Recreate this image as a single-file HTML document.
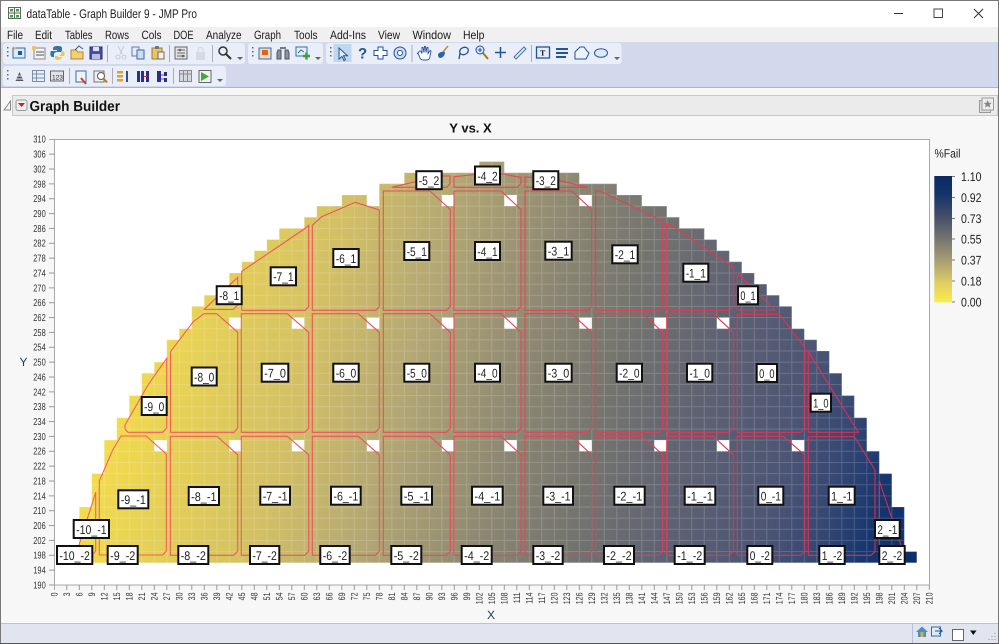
<!DOCTYPE html>
<html><head><meta charset="utf-8"><title>dataTable - Graph Builder 9 - JMP Pro</title>
<style>
html,body{margin:0;padding:0;background:#fff;width:999px;height:644px;overflow:hidden}
svg{display:block}
text{font-family:"Liberation Sans",sans-serif;text-rendering:geometricPrecision}
.m text{font-size:12px;fill:#1a1a1a}
.y text{font-size:10px;fill:#333}
.x text{font-size:9.5px;fill:#333;text-anchor:end}
.l rect{fill:#fff;stroke:#111;stroke-width:2}
.l text{font-size:12.5px;fill:#222}
.r path{fill:none;stroke:url(#red);stroke-width:1.1}
</style></head><body>
<svg width="999" height="644" viewBox="0 0 999 644" xmlns="http://www.w3.org/2000/svg">
<defs>
<linearGradient id="heat" gradientUnits="userSpaceOnUse" x1="80" y1="518" x2="872" y2="732">
<stop offset="0" stop-color="#f3dc4c"/><stop offset=".22" stop-color="#d2bf66"/><stop offset=".34" stop-color="#b3a774"/><stop offset=".48" stop-color="#8c8772"/><stop offset=".574" stop-color="#76766f"/><stop offset=".69" stop-color="#5f6272"/><stop offset=".81" stop-color="#4c5574"/><stop offset=".874" stop-color="#374873"/><stop offset=".936" stop-color="#17366e"/><stop offset="1" stop-color="#0a2d69"/>
</linearGradient>
<linearGradient id="red" gradientUnits="userSpaceOnUse" x1="80" y1="0" x2="900" y2="0"><stop offset="0" stop-color="#f4655c"/><stop offset=".5" stop-color="#e9475a"/><stop offset="1" stop-color="#d82a50"/></linearGradient>
<linearGradient id="leg" x1="0" y1="0" x2="0" y2="1"><stop offset="0" stop-color="#0a2a62"/><stop offset=".14" stop-color="#15336a"/><stop offset=".3" stop-color="#3f4a68"/><stop offset=".5" stop-color="#75756f"/><stop offset=".7" stop-color="#b1a672"/><stop offset=".85" stop-color="#dfcf62"/><stop offset="1" stop-color="#fdeb47"/></linearGradient>
<pattern id="grid" patternUnits="userSpaceOnUse" x="78.8" y="161.1" width="12.5" height="11.143"><path d="M.5 0V11.143M0 .5H12.5" stroke="#fff" stroke-opacity=".17" fill="none"/></pattern>
<pattern id="tx" patternUnits="userSpaceOnUse" x="53.8" y="585" width="12.5" height="6"><path d="M.5 0V6" stroke="#999" fill="none"/></pattern>
<pattern id="ty" patternUnits="userSpaceOnUse" x="49" y="138.8" width="6" height="14.857"><path d="M0 .5H6" stroke="#999" fill="none"/></pattern>
</defs>

<!-- window -->
<rect width="999" height="644" fill="#f7f7f7"/>
<rect width="999" height="27" fill="#fff"/>
<rect width="999" height="1" fill="#777"/>
<rect y="27" width="999" height="15" fill="#f0f0f0"/>
<rect y="42" width="999" height="45" fill="#d3d9ec"/>
<rect y="87" width="999" height="1" fill="#aab2d4"/>

<!-- title bar -->
<g fill="none" stroke="#5a6a55"><rect x="8.5" y="7.5" width="12" height="11"/><path d="M14.5 7.5v11M8.5 13h12"/></g>
<g fill="#3fa34d"><rect x="10" y="9" width="3" height="2.5"/><rect x="16" y="9" width="3" height="2.5"/><rect x="10" y="15" width="3" height="2.5"/><rect x="16" y="15" width="3" height="2.5"/></g>
<text x="26.5" y="18" font-size="12.5" fill="#222" textLength="170.5" lengthAdjust="spacingAndGlyphs">dataTable - Graph Builder 9 - JMP Pro</text>
<path d="M894 13.5h9" stroke="#333" fill="none"/>
<rect x="934" y="9" width="8.5" height="8.5" fill="none" stroke="#444"/>
<path d="M974 9l9 9M983 9l-9 9" stroke="#333" fill="none"/>

<!-- menu -->
<g class="m">
<text x="7" y="39" textLength="16" lengthAdjust="spacingAndGlyphs">File</text>
<text x="35" y="39" textLength="17" lengthAdjust="spacingAndGlyphs">Edit</text>
<text x="65" y="39" textLength="27.5" lengthAdjust="spacingAndGlyphs">Tables</text>
<text x="105" y="39" textLength="24" lengthAdjust="spacingAndGlyphs">Rows</text>
<text x="141.5" y="39" textLength="20" lengthAdjust="spacingAndGlyphs">Cols</text>
<text x="173.5" y="39" textLength="20" lengthAdjust="spacingAndGlyphs">DOE</text>
<text x="206" y="39" textLength="35.5" lengthAdjust="spacingAndGlyphs">Analyze</text>
<text x="254" y="39" textLength="27" lengthAdjust="spacingAndGlyphs">Graph</text>
<text x="294" y="39" textLength="23.5" lengthAdjust="spacingAndGlyphs">Tools</text>
<text x="330" y="39" textLength="36" lengthAdjust="spacingAndGlyphs">Add-Ins</text>
<text x="378" y="39" textLength="22" lengthAdjust="spacingAndGlyphs">View</text>
<text x="412.5" y="39" textLength="38.5" lengthAdjust="spacingAndGlyphs">Window</text>
<text x="463" y="39" textLength="21.5" lengthAdjust="spacingAndGlyphs">Help</text>
</g>

<!-- toolbars -->
<g fill="#e9eef8">
<rect x="3" y="43" width="242" height="21" rx="3"/><rect x="248" y="43" width="75" height="21" rx="3"/><rect x="326" y="43" width="295.5" height="21" rx="3"/><rect x="3" y="66" width="223" height="20" rx="3"/>
</g>
<rect x="333.5" y="44" width="18" height="18" fill="#bfd8f0"/>
<g fill="#666"><path d="M7 47h1.500v1.500H7zM7 51h1.500v1.500H7zM7 55h1.500v1.500H7zM7 70h1.500v1.500H7zM7 74h1.500v1.500H7zM7 78h1.500v1.500H7zM252 47h1.500v1.500H252zM252 51h1.500v1.500H252zM252 55h1.500v1.500H252zM330 47h1.500v1.500H330zM330 51h1.500v1.500H330zM330 55h1.500v1.500H330z"/>
<path d="M237 57h6l-3 3zM315 57h6l-3 3zM614 57h6l-3 3zM217 79h6l-3 3z"/></g>
<g fill="#a8adb8"><rect x="107" y="45" width="1" height="17"/><rect x="169" y="45" width="1" height="17"/><rect x="212" y="45" width="1" height="17"/><rect x="411.5" y="45" width="1" height="17"/><rect x="531" y="45" width="1" height="17"/><rect x="69" y="68" width="1" height="16"/><rect x="112" y="68" width="1" height="16"/><rect x="173" y="68" width="1" height="16"/></g>

<!-- row 1 icons -->
<rect x="13" y="48" width="12" height="10" fill="#dfe9f6" stroke="#2f6ea8"/><path d="M13 46l3 2-2 2z" fill="#f0b72c"/><rect x="18" y="51" width="4" height="4" fill="#1d5c97"/>
<rect x="34" y="48" width="11" height="11" fill="#f3f3f3" stroke="#8a8a8a"/><path d="M32 46h4v4h-4z" fill="#f0c94a"/><path d="M36 52h8M36 55h8" stroke="#555"/>
<path d="M57 46c-4 0-4 2-4 4h4v1h-6c-1 2-1 5 1 6h2v-2c0-2 1-3 3-3h3c2 0 2-1 2-2v-2c0-2-3-2-5-2z" fill="#3572a5"/><path d="M57 60c4 0 5-2 5-3h-4v-1h6c1-2 1-4-1-5h-2v2c0 2-1 3-3 3h-3v2c0 1 1 2 2 2z" fill="#f3c93f"/>
<path d="M71 50h5l2 2h5v7H71z" fill="#f2cf73" stroke="#b08a35"/><path d="M75 50l4-4 4 3" fill="none" stroke="#555"/>
<rect x="90" y="47" width="12" height="12" fill="#4a4fa0" stroke="#2c2f73"/><rect x="93" y="47" width="6" height="4" fill="#dfe3f2"/><rect x="92" y="54" width="8" height="5" fill="#b9bde0"/>
<path d="M118 46l4 8M124 46l-4 8" stroke="#c5cad4" fill="none"/><circle cx="118" cy="57" r="2" fill="none" stroke="#c5cad4"/><circle cx="124" cy="57" r="2" fill="none" stroke="#c5cad4"/>
<rect x="132" y="47" width="7" height="9" fill="#e6edf8" stroke="#5f7fa8"/><rect x="137" y="50" width="7" height="9" fill="#cfdcf0" stroke="#3b6aa0"/>
<rect x="152" y="48" width="10" height="11" fill="#e8c56a" stroke="#9b7a2e"/><rect x="155" y="46" width="4" height="3" fill="#777"/><rect x="158" y="52" width="6" height="7" fill="#f2f2f2" stroke="#7a6a3a"/>
<rect x="175" y="47" width="12" height="12" fill="#e4e4e4" stroke="#666"/><path d="M177 50h8M177 53h8M177 56h8" stroke="#666"/><circle cx="180" cy="50" r="1.300" fill="#666"/><circle cx="183" cy="56" r="1.300" fill="#666"/>
<rect x="196" y="52" width="9" height="8" fill="#d5dae4"/><path d="M198 52v-2a2.500 2.500 0 015 0v2" fill="none" stroke="#d5dae4" stroke-width="1.300"/>
<circle cx="223" cy="51" r="4" fill="none" stroke="#333" stroke-width="1.500"/><path d="M226 54l5 5" stroke="#333" stroke-width="2"/>
<rect x="259" y="48" width="12" height="11" fill="#f4d9c2" stroke="#3a6ea5"/><rect x="262" y="50" width="6" height="5" fill="#d9651f"/>
<path d="M278 50h3v9h-4v-6zM285 50h3l1 3v6h-4z" fill="#8a949f" stroke="#4a5560"/><path d="M280 48h6" stroke="#4a5560" fill="none" stroke-width="1.500"/>
<rect x="296" y="47" width="11" height="9" fill="#e6eef8" stroke="#2f6ea8"/><path d="M298 53l3-3 3 2" stroke="#2f6ea8" fill="none"/><path d="M303 56h7M306.500 52.500v7" stroke="#3f9d3f" stroke-width="2.500"/>
<path d="M339 48v11l3-2.500 2 4 1.500-.7-2-4h4z" fill="#e4eefa" stroke="#24549a"/>
<text x="358" y="58.500" font-size="15" font-weight="bold" fill="#1f4e9b">?</text>
<path d="M378 47h5v3.500h4v5h-4V59h-5v-3.500h-4v-5h4z" fill="#fff" stroke="#2153a0"/>
<circle cx="400" cy="53" r="6" fill="#cfdcf0" stroke="#2153a0"/><circle cx="400" cy="53" r="2.500" fill="#fff" stroke="#2153a0"/>
<path d="M418 53l2 5c1 2 2 2 4 2h3c2 0 3-2 3-4l1-5-1-.5-2 3 0-6h-1l-1 5-.5-6h-1l-.5 6-1-5h-1v6l-1-2c-1-1-2-.5-2 .5l-2 2z" fill="#fff" stroke="#2153a0" stroke-width=".9"/>
<path d="M438 54c2-2 5-3 7-2 0 3-2 6-5 6-1 0-2-1-2-4z" fill="#2c62ad"/><path d="M443 52l5-6" stroke="#c8892c" stroke-width="1.500"/>
<ellipse cx="464" cy="51" rx="4.500" ry="3.500" fill="none" stroke="#2153a0" stroke-width="1.300" transform="rotate(-25 464 51)"/><path d="M460 53l-1 6" stroke="#2153a0" stroke-width="1.300"/>
<circle cx="480" cy="50" r="4" fill="#dbe7f6" stroke="#2153a0"/><path d="M483 53l5 6" stroke="#a8781f" stroke-width="2"/><path d="M478 50h4M480 48v4" stroke="#2153a0"/>
<path d="M495 52.500h11M500.500 47v11" stroke="#2153a0" stroke-width="1.500"/>
<path d="M514 57l10-10 2 2-10 10z" fill="#dfe8f5" stroke="#4a74ad"/>
<rect x="536.500" y="47" width="13" height="11" fill="#e4eefa" stroke="#2153a0" stroke-width="1.300"/><text x="540" y="55.500" font-size="8" font-weight="bold" style="font-family:'Liberation Serif',serif" fill="#111">T</text>
<path d="M556 49h12M556 53h12M556 57h10" stroke="#2153a0" stroke-width="2" fill="none"/>
<path d="M575 59v-7l5-5h4l3 4 2 2-3 6z" fill="#eef3fa" stroke="#2153a0"/>
<ellipse cx="601" cy="53" rx="6.500" ry="4.300" fill="#dfe9f6" stroke="#2153a0"/>

<!-- row 2 icons -->
<path d="M19.500 72l4 9h-8z" fill="#555"/><path d="M15 79h9M16.500 76h6" stroke="#e9eef8"/>
<g fill="none" stroke="#7a8ea8"><rect x="32.500" y="70.500" width="12" height="11"/><path d="M36.500 70.500v11M32.500 74h12M32.500 78h12"/></g>
<rect x="50.500" y="71" width="13" height="10" fill="#dfe3e8" stroke="#666"/><text x="52" y="79.500" font-size="6.500" fill="#333">123</text>
<rect x="76" y="71" width="10" height="11" fill="#f0f4fa" stroke="#3a6ea5"/><path d="M81 78l5 6" stroke="#c9402a" stroke-width="2"/>
<rect x="94" y="71" width="10" height="11" fill="#eee" stroke="#777"/><circle cx="101" cy="76" r="3.500" fill="#fff" stroke="#555"/><path d="M103.500 78.500l3.500 4" stroke="#b07c22" stroke-width="2"/>
<g fill="#d9a52b"><rect x="117" y="71" width="6" height="2.500"/><rect x="117" y="75" width="6" height="2.500"/><rect x="117" y="79" width="6" height="2.500"/></g><path d="M127 71v11" stroke="#2153a0" stroke-width="2"/>
<g fill="#26308f"><rect x="137" y="71" width="3" height="11"/><rect x="141" y="71" width="3" height="11"/><rect x="146" y="71" width="3" height="11"/></g><path d="M144 76.500h3" stroke="#c33" />
<g fill="#26308f"><rect x="157" y="71" width="4" height="11"/><rect x="164" y="72" width="3" height="4"/><rect x="164" y="78" width="3" height="4"/></g><path d="M161 75h3M161 79h3" stroke="#c33"/>
<g fill="none" stroke="#8a8a8a"><rect x="179.500" y="70.500" width="12" height="11" fill="#d5d8de"/><path d="M183.500 70.500v11M187.500 70.500v11M179.500 74h12"/></g>
<rect x="199" y="70.500" width="12" height="12" fill="#f2f2f2" stroke="#666"/><path d="M201 72v9l8-4.500z" fill="#3cab3c"/>

<!-- graph builder header -->
<path d="M10.500 101v9H4z" fill="#f4f4f4" stroke="#888"/>
<rect x="12.500" y="95.500" width="985" height="20" fill="#ebebeb" stroke="#c8c8c8"/>
<rect x="16" y="100" width="11" height="10.500" rx="2" fill="#efefef" stroke="#999"/>
<path d="M18 103h7l-3.500 4z" fill="#d8171f"/>
<text x="29.500" y="111" font-size="14.500" font-weight="bold" fill="#111" textLength="90.500" lengthAdjust="spacingAndGlyphs">Graph Builder</text>
<rect x="979.500" y="100.500" width="11" height="12" fill="#ddd" stroke="#999"/>
<rect x="982" y="98" width="11.500" height="12" fill="#eee" stroke="#999"/>
<path d="M987.700 100l1.200 2.700 2.800.2-2.100 1.900.7 2.800-2.600-1.500-2.600 1.500.7-2.800-2.100-1.900 2.800-.2z" fill="#888"/>

<!-- plot -->
<text x="470.500" y="132.500" font-size="13" font-weight="bold" fill="#111" text-anchor="middle">Y vs. X</text>
<rect x="54.500" y="139.500" width="875" height="445.500" fill="#fff" stroke="#aaa"/>
<path d="M79.300 562.700V507H91.800V473.600H104.300V440.100H116.800V417.800H129.300V395.600H141.800V373.300H154.300V362.100H166.800V339.800H179.300V328.700H191.800V306.400H204.300V295.300H229.300V273H241.800V261.800H254.300V250.700H266.800V239.600H279.300V228.400H304.300V217.300H316.800V206.100H341.800V195H366.800V206.100H379.300V183.800H404.300V172.700H479.300V161.600H504.300V172.700H579.300V183.800H616.800V195H641.800V206.100H666.800V217.300H679.300V228.400H704.300V239.600H716.800V250.700H729.300V261.800H741.800V273H754.300V284.100H766.800V295.300H779.300V306.400H791.800V328.700H804.300V339.800H816.800V351H829.300V373.300H841.800V395.600H854.300V417.800H866.800V451.300H879.300V473.600H891.800V507H904.300V551.600H916.800V562.700Z" fill="url(#heat)"/>
<path d="M79.300 562.700V507H91.800V473.600H104.300V440.100H116.800V417.800H129.300V395.600H141.800V373.300H154.300V362.100H166.800V339.800H179.300V328.700H191.800V306.400H204.300V295.300H229.300V273H241.800V261.800H254.300V250.700H266.800V239.600H279.300V228.400H304.300V217.300H316.800V206.100H341.800V195H366.800V206.100H379.300V183.800H404.300V172.700H479.300V161.600H504.300V172.700H579.300V183.800H616.800V195H641.800V206.100H666.800V217.300H679.300V228.400H704.300V239.600H716.800V250.700H729.300V261.800H741.800V273H754.300V284.100H766.800V295.300H779.300V306.400H791.800V328.700H804.300V339.800H816.800V351H829.300V373.300H841.800V395.600H854.300V417.800H866.800V451.300H879.300V473.600H891.800V507H904.300V551.600H916.800V562.700Z" fill="url(#grid)"/>
<!-- holes -->
<g fill="#fff">
<rect x="441.800" y="195" width="12.500" height="11.100"/><rect x="504.300" y="195" width="12.500" height="11.100"/><rect x="579.300" y="195" width="12.500" height="11.100"/>
<rect x="229.300" y="317.600" width="12.500" height="11.100"/><rect x="291.800" y="317.600" width="12.500" height="11.100"/><rect x="366.800" y="317.600" width="12.500" height="11.100"/><rect x="441.800" y="317.600" width="12.500" height="11.100"/><rect x="504.300" y="317.600" width="12.500" height="11.100"/><rect x="579.300" y="317.600" width="12.500" height="11.100"/><rect x="654.300" y="317.600" width="12.500" height="11.100"/><rect x="716.800" y="317.600" width="12.500" height="11.100"/>
<rect x="154.300" y="440.100" width="12.500" height="11.200"/><rect x="229.300" y="440.100" width="12.500" height="11.200"/><rect x="291.800" y="440.100" width="12.500" height="11.200"/><rect x="366.800" y="440.100" width="12.500" height="11.200"/><rect x="441.800" y="440.100" width="12.500" height="11.200"/><rect x="504.300" y="440.100" width="12.500" height="11.200"/><rect x="579.300" y="440.100" width="12.500" height="11.200"/><rect x="654.300" y="440.100" width="12.500" height="11.200"/><rect x="716.800" y="440.100" width="12.500" height="11.200"/><rect x="791.800" y="440.100" width="12.500" height="11.200"/>
</g>

<!-- reticle outlines -->
<g class="r">
<path d="M383.300 191H430L450.300 209.500V306.300L446.700 310.300H383.300Z"/>
<path d="M454 191H501L521 209.500V306.300L517 310.300H454Z"/>
<path d="M525 191H571.700L591.700 209.500V306.300L587.700 310.300H525Z"/>
<path d="M241.300 313.700H287.300L308.700 332.300V428.300L304.700 432.300H241.300Z"/>
<path d="M312.300 313.700H358.300L379.300 332.300V428.300L375.300 432.300H312.300Z"/>
<path d="M383.300 313.700H430L450.300 332.300V428.300L446.300 432.300H383.300Z"/>
<path d="M454 313.700H501L521 332.300V428.300L517 432.300H454Z"/>
<path d="M525 313.700H571.700L591.700 332.300V428.300L587.700 432.300H525Z"/>
<path d="M595.700 313.700H642.700L662.700 332.300V428.300L658.700 432.300H595.700Z"/>
<path d="M666.700 313.700H713.300L733.300 332.300V428.300L729.300 432.300H666.700Z"/>
<path d="M170.300 436.300H217L237.700 454.800V551.300L233.700 555.300H170.300Z"/>
<path d="M241.300 436.300H287.300L308.700 454.800V551.300L304.700 555.300H241.300Z"/>
<path d="M312.300 436.300H358.300L379.300 454.800V551.300L375.300 555.300H312.300Z"/>
<path d="M383.300 436.300H430L450.300 454.800V551.300L446.300 555.300H383.300Z"/>
<path d="M454 436.300H501L521 454.800V551.300L517 555.300H454Z"/>
<path d="M525 436.300H571.700L591.700 454.800V551.300L587.700 555.300H525Z"/>
<path d="M595.700 436.300H642.700L662.700 454.800V551.300L658.700 555.300H595.700Z"/>
<path d="M666.700 436.300H713.300L733.300 454.800V551.300L729.300 555.300H666.700Z"/>
<path d="M737.300 436.300H783.300L804.700 455V551.300L800.700 555.300H737.300Z"/>
<path d="M121 436H146L166.300 454V551L162.700 555H99.300V481L112.700 450Z"/>
<path d="M79 545L95.700 492.300V551L92 555H79Z"/>
<path d="M125 425L148 385L166.700 358.300V428L162.700 432.300H128L125 429Z"/>
<path d="M170.500 351.700L193.300 321.700L204 313.700H216.700L237.700 332.300V428L234 432.300H170.500Z"/>
<path d="M204.300 309.300L237.700 277.300V305L233.300 309.500Z"/>
<path d="M241.700 271.300L304.300 229L308.700 225.300V306.700L305 310.300H241.700Z"/>
<path d="M312.300 225.300L321.700 216.700L355.300 202.300L379.300 210V306.700L375.700 310.300H312.300Z"/>
<path d="M595.700 191H600L662.300 220.700V306.700L658.700 310.300H595.700Z"/>
<path d="M666.700 224.300H670L733.300 267.300V306.700L729.300 310.300H666.700Z"/>
<path d="M737.300 273.300L775 310H737.300Z"/>
<path d="M737.300 314.300H779.300L804.700 347.300V428.300L800.700 432.300H737.300Z"/>
<path d="M808.300 351.300L858.300 432.300H808.300Z"/>
<path d="M808.300 436.700H854.300L875 470V551.500L871 555.300H808.300Z"/>
<path d="M879.300 481L901 545L905 555.300H879.300Z"/>
<path d="M391.700 187.300L440 176H450V183.500L446.700 187.300Z"/>
<path d="M454 187.300V176.700L480 174L500 173.300L516.700 176.700L521 177.300V183.300L517.300 187.300Z"/>
<path d="M525 187.300V176.700L560 180.700L587.300 187.300Z"/>
</g>

<!-- labels -->
<g class="l">
<rect x="216.700" y="286.200" width="25" height="18"/><text x="219.100" y="300" textLength="20.200" lengthAdjust="spacingAndGlyphs">-8_1</text>
<rect x="141.700" y="397" width="25" height="18"/><text x="144.100" y="410.800" textLength="20.200" lengthAdjust="spacingAndGlyphs">-9_0</text>
<rect x="191.700" y="367.500" width="25" height="18"/><text x="194.100" y="381.300" textLength="20.200" lengthAdjust="spacingAndGlyphs">-8_0</text>
<rect x="118.300" y="490.300" width="30" height="18"/><text x="120.700" y="504.100" textLength="25.200" lengthAdjust="spacingAndGlyphs">-9_-1</text>
<rect x="188.700" y="487" width="30.300" height="18"/><text x="191.100" y="500.800" textLength="25.500" lengthAdjust="spacingAndGlyphs">-8_-1</text>
<rect x="73.700" y="520" width="35.300" height="18"/><text x="76.100" y="533.800" textLength="30.500" lengthAdjust="spacingAndGlyphs">-10_-1</text>
<rect x="57" y="546" width="35.300" height="18"/><text x="59.400" y="559.800" textLength="30.500" lengthAdjust="spacingAndGlyphs">-10_-2</text>
<rect x="107.700" y="546" width="30" height="18"/><text x="110.100" y="559.800" textLength="25.200" lengthAdjust="spacingAndGlyphs">-9_-2</text>
<rect x="178.300" y="546" width="30" height="18"/><text x="180.700" y="559.800" textLength="25.200" lengthAdjust="spacingAndGlyphs">-8_-2</text>
<rect x="250" y="546" width="29.300" height="18"/><text x="252.400" y="559.800" textLength="24.500" lengthAdjust="spacingAndGlyphs">-7_-2</text>
<rect x="320.300" y="546" width="29.400" height="18"/><text x="322.700" y="559.800" textLength="24.600" lengthAdjust="spacingAndGlyphs">-6_-2</text>
<rect x="391.300" y="546" width="30" height="18"/><text x="393.700" y="559.800" textLength="25.200" lengthAdjust="spacingAndGlyphs">-5_-2</text>
<rect x="461.700" y="546" width="30" height="18"/><text x="464.100" y="559.800" textLength="25.200" lengthAdjust="spacingAndGlyphs">-4_-2</text>
<rect x="533.300" y="546" width="29.400" height="18"/><text x="535.700" y="559.800" textLength="24.600" lengthAdjust="spacingAndGlyphs">-3_-2</text>
<rect x="604" y="546" width="30" height="18"/><text x="606.400" y="559.800" textLength="25.200" lengthAdjust="spacingAndGlyphs">-2_-2</text>
<rect x="674.700" y="546" width="30" height="18"/><text x="677.100" y="559.800" textLength="25.200" lengthAdjust="spacingAndGlyphs">-1_-2</text>
<rect x="747.300" y="546" width="25" height="18"/><text x="749.700" y="559.800" textLength="20.200" lengthAdjust="spacingAndGlyphs">0_-2</text>
<rect x="819.300" y="546" width="25.400" height="18"/><text x="821.700" y="559.800" textLength="20.600" lengthAdjust="spacingAndGlyphs">1_-2</text>
<rect x="879.300" y="546" width="25.400" height="18"/><text x="881.700" y="559.800" textLength="20.600" lengthAdjust="spacingAndGlyphs">2_-2</text>
<rect x="260.300" y="486.700" width="29.700" height="18"/><text x="262.700" y="500.500" textLength="24.900" lengthAdjust="spacingAndGlyphs">-7_-1</text>
<rect x="331" y="486.700" width="29.700" height="18"/><text x="333.400" y="500.500" textLength="24.900" lengthAdjust="spacingAndGlyphs">-6_-1</text>
<rect x="401.300" y="486.700" width="30.700" height="18"/><text x="403.700" y="500.500" textLength="25.900" lengthAdjust="spacingAndGlyphs">-5_-1</text>
<rect x="472" y="486.700" width="30.700" height="18"/><text x="474.400" y="500.500" textLength="25.900" lengthAdjust="spacingAndGlyphs">-4_-1</text>
<rect x="543.300" y="486.700" width="29.700" height="18"/><text x="545.700" y="500.500" textLength="24.900" lengthAdjust="spacingAndGlyphs">-3_-1</text>
<rect x="614.300" y="486.700" width="30.400" height="18"/><text x="616.700" y="500.500" textLength="25.600" lengthAdjust="spacingAndGlyphs">-2_-1</text>
<rect x="684.700" y="486.700" width="30.600" height="18"/><text x="687.100" y="500.500" textLength="25.800" lengthAdjust="spacingAndGlyphs">-1_-1</text>
<rect x="758.300" y="486.700" width="25" height="18"/><text x="760.700" y="500.500" textLength="20.200" lengthAdjust="spacingAndGlyphs">0_-1</text>
<rect x="828.700" y="486.700" width="26" height="18"/><text x="831.100" y="500.500" textLength="21.200" lengthAdjust="spacingAndGlyphs">1_-1</text>
<rect x="875" y="520" width="24.700" height="18"/><text x="877.400" y="533.800" textLength="19.900" lengthAdjust="spacingAndGlyphs">2_-1</text>
<rect x="261.700" y="363.700" width="26.600" height="18"/><text x="264.100" y="377.500" textLength="21.800" lengthAdjust="spacingAndGlyphs">-7_0</text>
<rect x="333.300" y="363.700" width="25.400" height="18"/><text x="335.700" y="377.500" textLength="20.600" lengthAdjust="spacingAndGlyphs">-6_0</text>
<rect x="404.300" y="363.700" width="25" height="18"/><text x="406.700" y="377.500" textLength="20.200" lengthAdjust="spacingAndGlyphs">-5_0</text>
<rect x="475" y="363.700" width="25" height="18"/><text x="477.400" y="377.500" textLength="20.200" lengthAdjust="spacingAndGlyphs">-4_0</text>
<rect x="545.300" y="363.700" width="26.400" height="18"/><text x="547.700" y="377.500" textLength="21.600" lengthAdjust="spacingAndGlyphs">-3_0</text>
<rect x="616.700" y="363.700" width="25.300" height="18"/><text x="619.100" y="377.500" textLength="20.500" lengthAdjust="spacingAndGlyphs">-2_0</text>
<rect x="687" y="363.700" width="25.300" height="18"/><text x="689.400" y="377.500" textLength="20.500" lengthAdjust="spacingAndGlyphs">-1_0</text>
<rect x="756.700" y="364" width="20.300" height="18"/><text x="759.100" y="377.800" textLength="15.500" lengthAdjust="spacingAndGlyphs">0_0</text>
<rect x="810.700" y="393.700" width="20.300" height="18"/><text x="813.100" y="407.500" textLength="15.500" lengthAdjust="spacingAndGlyphs">1_0</text>
<rect x="738" y="286.300" width="20" height="18"/><text x="740.400" y="300.100" textLength="15.200" lengthAdjust="spacingAndGlyphs">0_1</text>
<rect x="683.300" y="263.700" width="25" height="18"/><text x="685.700" y="277.500" textLength="20.200" lengthAdjust="spacingAndGlyphs">-1_1</text>
<rect x="612.300" y="245.300" width="25.400" height="18"/><text x="614.700" y="259.100" textLength="20.600" lengthAdjust="spacingAndGlyphs">-2_1</text>
<rect x="545.300" y="241.700" width="26.400" height="18"/><text x="547.700" y="255.500" textLength="21.600" lengthAdjust="spacingAndGlyphs">-3_1</text>
<rect x="475" y="242" width="25" height="18"/><text x="477.400" y="255.800" textLength="20.200" lengthAdjust="spacingAndGlyphs">-4_1</text>
<rect x="404.300" y="242" width="25" height="18"/><text x="406.700" y="255.800" textLength="20.200" lengthAdjust="spacingAndGlyphs">-5_1</text>
<rect x="333.300" y="249" width="25.400" height="18"/><text x="335.700" y="262.800" textLength="20.600" lengthAdjust="spacingAndGlyphs">-6_1</text>
<rect x="270.700" y="267.300" width="25.300" height="18"/><text x="273.100" y="281.100" textLength="20.500" lengthAdjust="spacingAndGlyphs">-7_1</text>
<rect x="416.300" y="171.200" width="25.400" height="18"/><text x="418.700" y="185" textLength="20.600" lengthAdjust="spacingAndGlyphs">-5_2</text>
<rect x="475" y="166.500" width="25" height="18"/><text x="477.400" y="180.300" textLength="20.200" lengthAdjust="spacingAndGlyphs">-4_2</text>
<rect x="533.300" y="171.200" width="25" height="18"/><text x="535.700" y="185" textLength="20.200" lengthAdjust="spacingAndGlyphs">-3_2</text>
</g>

<!-- axes ticks -->
<rect x="54" y="585" width="876" height="5" fill="url(#tx)"/>
<rect x="49" y="139" width="5.500" height="447" fill="url(#ty)"/>
<g class="y">
<text x="33.300" y="142.700" textLength="12.400" lengthAdjust="spacingAndGlyphs">310</text>
<text x="33.300" y="157.600" textLength="12.400" lengthAdjust="spacingAndGlyphs">306</text>
<text x="33.300" y="172.400" textLength="12.400" lengthAdjust="spacingAndGlyphs">302</text>
<text x="33.300" y="187.300" textLength="12.400" lengthAdjust="spacingAndGlyphs">298</text>
<text x="33.300" y="202.200" textLength="12.400" lengthAdjust="spacingAndGlyphs">294</text>
<text x="33.300" y="217" textLength="12.400" lengthAdjust="spacingAndGlyphs">290</text>
<text x="33.300" y="231.900" textLength="12.400" lengthAdjust="spacingAndGlyphs">286</text>
<text x="33.300" y="246.700" textLength="12.400" lengthAdjust="spacingAndGlyphs">282</text>
<text x="33.300" y="261.600" textLength="12.400" lengthAdjust="spacingAndGlyphs">278</text>
<text x="33.300" y="276.400" textLength="12.400" lengthAdjust="spacingAndGlyphs">274</text>
<text x="33.300" y="291.300" textLength="12.400" lengthAdjust="spacingAndGlyphs">270</text>
<text x="33.300" y="306.100" textLength="12.400" lengthAdjust="spacingAndGlyphs">266</text>
<text x="33.300" y="321" textLength="12.400" lengthAdjust="spacingAndGlyphs">262</text>
<text x="33.300" y="335.900" textLength="12.400" lengthAdjust="spacingAndGlyphs">258</text>
<text x="33.300" y="350.700" textLength="12.400" lengthAdjust="spacingAndGlyphs">254</text>
<text x="33.300" y="365.600" textLength="12.400" lengthAdjust="spacingAndGlyphs">250</text>
<text x="33.300" y="380.400" textLength="12.400" lengthAdjust="spacingAndGlyphs">246</text>
<text x="33.300" y="395.300" textLength="12.400" lengthAdjust="spacingAndGlyphs">242</text>
<text x="33.300" y="410.100" textLength="12.400" lengthAdjust="spacingAndGlyphs">238</text>
<text x="33.300" y="425" textLength="12.400" lengthAdjust="spacingAndGlyphs">234</text>
<text x="33.300" y="439.800" textLength="12.400" lengthAdjust="spacingAndGlyphs">230</text>
<text x="33.300" y="454.700" textLength="12.400" lengthAdjust="spacingAndGlyphs">226</text>
<text x="33.300" y="469.600" textLength="12.400" lengthAdjust="spacingAndGlyphs">222</text>
<text x="33.300" y="484.400" textLength="12.400" lengthAdjust="spacingAndGlyphs">218</text>
<text x="33.300" y="499.300" textLength="12.400" lengthAdjust="spacingAndGlyphs">214</text>
<text x="33.300" y="514.100" textLength="12.400" lengthAdjust="spacingAndGlyphs">210</text>
<text x="33.300" y="529" textLength="12.400" lengthAdjust="spacingAndGlyphs">206</text>
<text x="33.300" y="543.800" textLength="12.400" lengthAdjust="spacingAndGlyphs">202</text>
<text x="33.300" y="558.700" textLength="12.400" lengthAdjust="spacingAndGlyphs">198</text>
<text x="33.300" y="573.500" textLength="12.400" lengthAdjust="spacingAndGlyphs">194</text>
<text x="33.300" y="588.400" textLength="12.400" lengthAdjust="spacingAndGlyphs">190</text>
</g>
<g class="x">
<text transform="matrix(0 -.74 1 0 57.600 592.500)">0</text><text transform="matrix(0 -.74 1 0 70.100 592.500)">3</text><text transform="matrix(0 -.74 1 0 82.600 592.500)">6</text><text transform="matrix(0 -.74 1 0 95.100 592.500)">9</text><text transform="matrix(0 -.74 1 0 107.600 592.500)">12</text><text transform="matrix(0 -.74 1 0 120.100 592.500)">15</text><text transform="matrix(0 -.74 1 0 132.600 592.500)">18</text><text transform="matrix(0 -.74 1 0 145.100 592.500)">21</text><text transform="matrix(0 -.74 1 0 157.600 592.500)">24</text><text transform="matrix(0 -.74 1 0 170.100 592.500)">27</text><text transform="matrix(0 -.74 1 0 182.600 592.500)">30</text><text transform="matrix(0 -.74 1 0 195.100 592.500)">33</text><text transform="matrix(0 -.74 1 0 207.600 592.500)">36</text><text transform="matrix(0 -.74 1 0 220.100 592.500)">39</text><text transform="matrix(0 -.74 1 0 232.600 592.500)">42</text><text transform="matrix(0 -.74 1 0 245.100 592.500)">45</text><text transform="matrix(0 -.74 1 0 257.600 592.500)">48</text><text transform="matrix(0 -.74 1 0 270.100 592.500)">51</text><text transform="matrix(0 -.74 1 0 282.600 592.500)">54</text><text transform="matrix(0 -.74 1 0 295.100 592.500)">57</text><text transform="matrix(0 -.74 1 0 307.600 592.500)">60</text><text transform="matrix(0 -.74 1 0 320.100 592.500)">63</text><text transform="matrix(0 -.74 1 0 332.600 592.500)">66</text><text transform="matrix(0 -.74 1 0 345.100 592.500)">69</text><text transform="matrix(0 -.74 1 0 357.600 592.500)">72</text><text transform="matrix(0 -.74 1 0 370.100 592.500)">75</text><text transform="matrix(0 -.74 1 0 382.600 592.500)">78</text><text transform="matrix(0 -.74 1 0 395.100 592.500)">81</text><text transform="matrix(0 -.74 1 0 407.600 592.500)">84</text><text transform="matrix(0 -.74 1 0 420.100 592.500)">87</text><text transform="matrix(0 -.74 1 0 432.600 592.500)">90</text><text transform="matrix(0 -.74 1 0 445.100 592.500)">93</text><text transform="matrix(0 -.74 1 0 457.600 592.500)">96</text><text transform="matrix(0 -.74 1 0 470.100 592.500)">99</text><text transform="matrix(0 -.74 1 0 482.600 592.500)">102</text><text transform="matrix(0 -.74 1 0 495.100 592.500)">105</text><text transform="matrix(0 -.74 1 0 507.600 592.500)">108</text><text transform="matrix(0 -.74 1 0 520.100 592.500)">111</text><text transform="matrix(0 -.74 1 0 532.600 592.500)">114</text><text transform="matrix(0 -.74 1 0 545.100 592.500)">117</text><text transform="matrix(0 -.74 1 0 557.600 592.500)">120</text><text transform="matrix(0 -.74 1 0 570.100 592.500)">123</text><text transform="matrix(0 -.74 1 0 582.600 592.500)">126</text><text transform="matrix(0 -.74 1 0 595.100 592.500)">129</text><text transform="matrix(0 -.74 1 0 607.600 592.500)">132</text><text transform="matrix(0 -.74 1 0 620.100 592.500)">135</text><text transform="matrix(0 -.74 1 0 632.600 592.500)">138</text><text transform="matrix(0 -.74 1 0 645.100 592.500)">141</text><text transform="matrix(0 -.74 1 0 657.600 592.500)">144</text><text transform="matrix(0 -.74 1 0 670.100 592.500)">147</text><text transform="matrix(0 -.74 1 0 682.600 592.500)">150</text><text transform="matrix(0 -.74 1 0 695.100 592.500)">153</text><text transform="matrix(0 -.74 1 0 707.600 592.500)">156</text><text transform="matrix(0 -.74 1 0 720.100 592.500)">159</text><text transform="matrix(0 -.74 1 0 732.600 592.500)">162</text><text transform="matrix(0 -.74 1 0 745.100 592.500)">165</text><text transform="matrix(0 -.74 1 0 757.600 592.500)">168</text><text transform="matrix(0 -.74 1 0 770.100 592.500)">171</text><text transform="matrix(0 -.74 1 0 782.600 592.500)">174</text><text transform="matrix(0 -.74 1 0 795.100 592.500)">177</text><text transform="matrix(0 -.74 1 0 807.600 592.500)">180</text><text transform="matrix(0 -.74 1 0 820.100 592.500)">183</text><text transform="matrix(0 -.74 1 0 832.600 592.500)">186</text><text transform="matrix(0 -.74 1 0 845.100 592.500)">189</text><text transform="matrix(0 -.74 1 0 857.600 592.500)">192</text><text transform="matrix(0 -.74 1 0 870.100 592.500)">195</text><text transform="matrix(0 -.74 1 0 882.600 592.500)">198</text><text transform="matrix(0 -.74 1 0 895.100 592.500)">201</text><text transform="matrix(0 -.74 1 0 907.600 592.500)">204</text><text transform="matrix(0 -.74 1 0 920.100 592.500)">207</text><text transform="matrix(0 -.74 1 0 932.600 592.500)">210</text>
</g>
<text x="491" y="619" font-size="12" fill="#1f3a5f" text-anchor="middle">X</text>
<text x="23.500" y="366" font-size="12" fill="#1f3a5f" text-anchor="middle">Y</text>

<!-- legend -->
<text x="934.500" y="157.500" font-size="12" fill="#222" textLength="26" lengthAdjust="spacingAndGlyphs">%Fail</text>
<rect x="934.300" y="176" width="17.700" height="126.300" fill="url(#leg)"/>
<path d="M952 176.500h3M952 197.500h3M952 218.500h3M952 239h3M952 260h3M952 281h3M952 302h3" stroke="#777" fill="none"/>
<g font-size="12.500" fill="#222">
<text x="961" y="181" textLength="20.500" lengthAdjust="spacingAndGlyphs">1.10</text>
<text x="961" y="202" textLength="20.500" lengthAdjust="spacingAndGlyphs">0.92</text>
<text x="961" y="223" textLength="20.500" lengthAdjust="spacingAndGlyphs">0.73</text>
<text x="961" y="243.500" textLength="20.500" lengthAdjust="spacingAndGlyphs">0.55</text>
<text x="961" y="264.500" textLength="20.500" lengthAdjust="spacingAndGlyphs">0.37</text>
<text x="961" y="285.500" textLength="20.500" lengthAdjust="spacingAndGlyphs">0.18</text>
<text x="961" y="306.500" textLength="20.500" lengthAdjust="spacingAndGlyphs">0.00</text>
</g>

<!-- status bar -->
<rect y="623" width="999" height="1" fill="#b9bfdc"/>
<rect y="624" width="999" height="19" fill="#e0e5f0"/>
<rect x="912" y="624" width="1" height="19" fill="#b9bfdc"/>
<path d="M916 632l6-5.500 6 5.500h-2v5h-8v-5z" fill="#4a90c8"/><rect x="920.500" y="632" width="3" height="5" fill="#e9a83a"/>
<rect x="931.500" y="627" width="9" height="9" fill="#dfe9f6" stroke="#2f6ea8"/><path d="M935 631h7l-3-3M942 631l-3 3" stroke="#2153a0" fill="none"/>
<rect x="952.500" y="629.500" width="11" height="11" fill="#fff" stroke="#666"/>
<path d="M970 630.500h6.500l-3.200 4.500z" fill="#111"/>
<path d="M995 633v1M992 636v1M995 636v1M989 639v1M992 639v1M995 639v1" stroke="#aab" fill="none" stroke-width="1.500"/>

<!-- window frame -->
<rect x="0" y="0" width="1" height="644" fill="#777"/>
<rect x="998" y="0" width="1" height="644" fill="#777"/>
<rect x="0" y="643" width="999" height="1" fill="#555"/>
</svg>
</body></html>
